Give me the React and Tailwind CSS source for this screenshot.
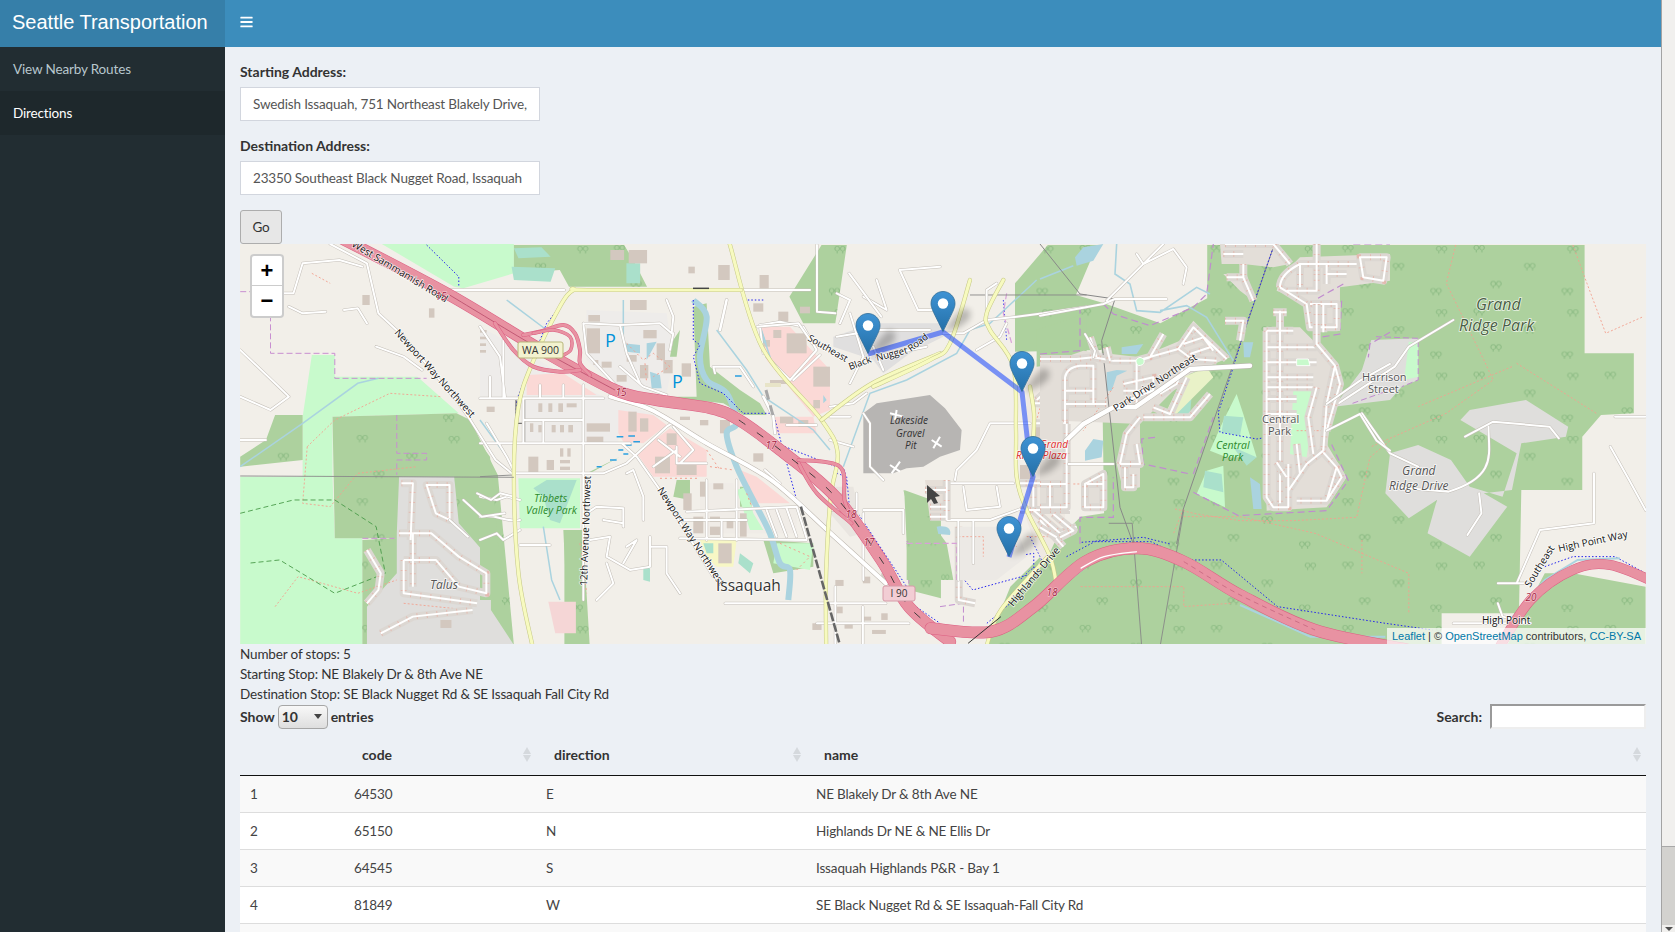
import React from "react";
import { FaBars } from "react-icons/fa";

// catmull-rom through a flat list of x,y pairs, keeps the big roads from looking angular
const curve = (pts) => {
  const p = [];
  for (let i = 0; i < pts.length; i += 2) p.push([pts[i], pts[i + 1]]);
  let d = `M${p[0][0]} ${p[0][1]}`;
  for (let i = 0; i < p.length - 1; i++) {
    const a = p[i - 1] || p[i];
    const b = p[i];
    const c = p[i + 1];
    const e = p[i + 2] || c;
    d += `C${b[0] + (c[0] - a[0]) / 6} ${b[1] + (c[1] - a[1]) / 6} ${c[0] - (e[0] - b[0]) / 6} ${c[1] - (e[1] - b[1]) / 6} ${c[0]} ${c[1]}`;
  }
  return d;
};

const Road = ({ d, w = 2.5, fill = "#ffffff", edge = "#c4bfb8" }) => (
  <>
    <path d={d} fill="none" stroke={edge} strokeWidth={w + 1} strokeLinejoin="round" strokeLinecap="round" vectorEffect="non-scaling-stroke" />
    <path d={d} fill="none" stroke={fill} strokeWidth={w} strokeLinejoin="round" strokeLinecap="round" vectorEffect="non-scaling-stroke" />
  </>
);

// housing streets: grey band, faint red garden dots, white street
const Estate = ({ d }) => (
  <>
    <path d={d} fill="none" stroke="#dcd7d2" strokeWidth="8" strokeLinejoin="round" vectorEffect="non-scaling-stroke" />
    <path d={d} fill="none" stroke="#ee8f7e" strokeWidth="6" strokeDasharray="1 9" opacity="0.4" vectorEffect="non-scaling-stroke" />
    <path d={d} fill="none" stroke="#ffffff" strokeWidth="2" strokeLinejoin="round" vectorEffect="non-scaling-stroke" />
  </>
);

const Line = ({ d, color, w = 1, dash }) => (
  <path d={d} fill="none" stroke={color} strokeWidth={w} strokeDasharray={dash} vectorEffect="non-scaling-stroke" />
);

const Pin = ({ x, y }) => (
  <g transform={`translate(${x - 12.5} ${y - 41})`}>
    <path d="M13 41L24 26L33 17L40 20L39 28L29 36Z" fill="#000000" opacity="0.24" filter="url(#pinBlur)" />
    <path
      d="M12.5 0.5C5.9 0.5 0.5 5.9 0.5 12.5C0.5 17.5 3.5 22 12.5 40.5C21.5 22 24.5 17.5 24.5 12.5C24.5 5.9 19.1 0.5 12.5 0.5Z"
      fill="url(#pinFill)"
      stroke="#2e6c97"
      strokeWidth="0.8"
    />
    <circle cx="12.5" cy="12.5" r="5.2" fill="#ffffff" />
  </g>
);

const labelFont = "'Open Sans','Noto Sans',sans-serif";

const MapText = ({ x, y, r = 0, size = 10, color = "#222222", italic, halo = true, children }) => (
  <text
    x={x}
    y={y}
    transform={r ? `rotate(${r} ${x} ${y})` : undefined}
    fontFamily={labelFont}
    fontSize={size}
    fontStyle={italic ? "italic" : "normal"}
    fill={color}
    stroke={halo ? "#ffffff" : "none"}
    strokeWidth={halo ? 1.6 : 0}
    strokeOpacity="0.75"
    paintOrder="stroke"
  >
    {children}
  </text>
);

const Blocks = ({ list, fill = "#d3c8bf" }) =>
  list.map(([x, y, w, h], i) => <rect key={i} x={x} y={y} width={w} height={h} fill={fill} />);

// around the WA 900 junction, true 3x crop
const bldTown = [
  [320,85,40,75],[325,45,35,20],[450,0,50,30],[365,185,30,18],[410,225,30,20],[340,180,15,15],[490,90,40,25],[530,130,25,50],[550,180,28,40],
  [480,195,25,40],[440,165,30,20],[605,190,28,40],[0,90,20,8],[0,110,20,8],[0,130,18,8],[0,150,18,8],[20,320,24,16],[175,310,12,26],[205,310,12,26],
  [235,310,14,26],[260,310,30,12],[150,370,10,26],[175,375,10,22],[215,375,12,22],[240,375,12,22],[265,375,14,22],[320,370,70,25],[320,410,50,18],
  [145,470,30,50],[200,480,22,30],[240,445,10,25],[262,445,10,25],[240,480,30,10],[240,500,30,10],[445,335,25,60],[480,355,25,40],[525,470,45,50],
  [560,400,30,35],[590,495,60,30],[660,545,20,45],[610,580,25,50],[700,550,30,18],[640,650,30,50],[690,650,30,15],[690,680,30,25],[740,660,20,25],
  [780,640,20,70],[715,730,40,60],[820,460,30,25],[920,100,60,60],[1000,200,50,60],[880,90,24,24],[850,120,20,20],[870,240,60,12],[900,350,40,20],
  [955,360,30,20],[1000,300,20,25],[960,20,30,20],[820,10,30,25],[895,35,30,30],[660,360,25,16],[600,350,30,10],[720,360,30,40],
];

const bldWest = [
  [310,165,16,30],[455,205,12,28],[1085,75,25,45],[1175,105,20,40],[1020,80,14,20],[480,1140,24,24],[1340,1100,16,20],[1400,1130,18,12],[1440,1120,14,20],
  [1290,1150,20,20],[1360,1150,18,16],[1420,1170,30,12],[850,30,30,30],[890,30,40,40],[1340,1020,18,18],[1400,1010,16,20],[1440,1000,10,20],
];

const treeSpots =
  "M24 30a5 7 0 1 1 .1 0M24 30v7M36 30a5 7 0 1 1 .1 0M36 30v7M132 84a5 7 0 1 1 .1 0M132 84v7M144 84a5 7 0 1 1 .1 0M144 84v7M224 33a5 7 0 1 1 .1 0M224 33v7M236 33a5 7 0 1 1 .1 0M236 33v7M60 138a5 7 0 1 1 .1 0M60 138v7M72 138a5 7 0 1 1 .1 0M72 138v7M212 159a5 7 0 1 1 .1 0M212 159v7M224 159a5 7 0 1 1 .1 0M224 159v7";

const eastForest =
  "M160 130L230 15H1375V340H1480V520L1410 525L1370 590V750H1240L1235 1120H1070V1215H100L150 1040L300 830L350 820L345 330L160 335ZM1290 1000L1350 1000L1505 1040V1215H1210Z";
const westForest =
  "M120 525H180V660L44 680V650L100 600ZM245 530L385 525L515 520L545 540L605 705L385 705V895H250ZM385 705H605L640 1215H310V900L385 895ZM640 15H880L900 60L930 140H760L740 90L640 100ZM1240 170L1310 15H1365L1340 250H1270ZM750 870H790L805 1215H750ZM1490 750L1570 790V1075L1500 1050Z";

const MapCanvas = () => (
  <svg width="1406" height="400" className="block" viewBox="0 0 1406 400">
    <defs>
      <linearGradient id="pinFill" x1="0" y1="0" x2="0" y2="1">
        <stop offset="0" stopColor="#3f93d4" />
        <stop offset="1" stopColor="#2470a8" />
      </linearGradient>
      <filter id="pinBlur" x="-50%" y="-50%" width="200%" height="200%">
        <feGaussianBlur stdDeviation="3.2" />
      </filter>
      <pattern id="trees" width="280" height="190" patternUnits="userSpaceOnUse">
        <path d={treeSpots} fill="none" stroke="#8fbd86" strokeWidth="2.6" />
      </pattern>
    </defs>
    <rect width="1406" height="400" fill="#f2efe9" />

    {/* west land */}
    <g transform="translate(-20 -4) scale(0.4592 0.3333)">
      <path d="M200 345H250V410H430L520 520L245 530V710H180V530ZM44 710H245L250 895H310V1215H44ZM350 10H640V100L530 145L510 140ZM400 670H440V705H400Z" fill="#c8facc" />
      <path d={westForest} fill="#add19e" />
      <path d={westForest} fill="url(#trees)" />
      <path d="M390 710H510L520 850L590 960V1110L640 1215H320V1100L385 1000L385 880Z" fill="#dfdedc" />
      <path d="M640 25L700 22L720 50L650 55ZM635 80L730 85L720 125L640 120ZM885 70H915V130H885Z" fill="#aae0cb" />
      <path d="M715 1085H775V1180H730Z" fill="#f5d6d6" />
      <Blocks list={bldWest} />
      <Line color="#aad3df" w={1.5} d="M44 680L180 550L300 430L345 415" />
      <Line color="#c88fd0" w={1} dash="6 3" d="M44 155H110V340H250V415H450M385 525V640H450V660H385V705M310 895H380M1495 905H1568M1500 905V1050" />
      <Line color="#f3a08f" w={0.9} dash="2 2" d="M190 620L250 540L370 460L480 470M190 620L180 790L240 800L300 700L430 680M120 1100L170 1010L300 1060L385 1020M400 1090L540 1110M200 100L240 130" />
      <Line color="#4a9b4a" w={0.9} dash="5 3" d="M44 820L160 780L250 780L340 860L360 1000L250 1060L130 960L60 970" />
      <Line color="#2222ee" w={1} dash="1.5 2" d="M450 15L520 110V140M1230 620L1360 690L1370 780L1500 1050M1505 1090L1568 1150" />
    </g>

    {/* east land */}
    <g transform="translate(700 -4) scale(0.4688 0.3333)">
      <path d={eastForest} fill="#add19e" />
      <path d={eastForest} fill="url(#trees)" />
      <path d="M335 15H570V175L470 250L350 190L290 165Z" fill="#f2efe9" />
      <path d="M960 640L1020 615L1090 660L1130 740L1200 770L1230 640L1110 540L1130 510L1210 490L1250 480L1340 560L1335 590L1240 610L1220 750L1160 760L1210 800L1130 950L1040 880L1060 780L1000 835L950 760Z" fill="#dfdedc" />
      <path d="M920 300L1020 295L1020 420L985 440L960 480L840 500L900 390Z" fill="#dfdedc" />
      <path d="M1000 305L1020 310V410L990 420Z" fill="#c8facc" />
      <Line color="#c08bcf" w={1} dash="6 3" d="M930 290L1020 295L1020 420L985 440M880 490L960 450M0 1100L50 1090V1150" />
      <Line color="#f3a08f" w={0.9} dash="2 2" d="M1100 15L1080 130L1160 360L1180 420L1080 520L920 620M1350 15L1380 130L1420 280L1500 230M1230 370L1400 520M520 830L640 830L800 880L1000 1000L1000 1120M300 1040H520L520 1100L620 1090M900 900L900 1000M1220 380L1020 500" />
      <Line color="#2222ee" w={1} dash="1.5 2" d="M270 950L330 905H450L530 960H600L720 1100L950 1150L1050 1170M110 960L200 940V1000L70 1050L40 1000M100 1150L150 1090M1290 980L1350 950H1440L1505 1000" />
      <Line color="#888888" w={0.9} d="M520 810L470 1215M360 850L410 850L430 1215" />
      <Road w={2} d="M1120 590L1180 545L1300 560L1320 595M1170 560C1170 640 1190 710 1085 755L960 740M1150 760L1155 820L1125 885M850 490L970 380L1000 320L1095 240M900 520L960 640L1020 680" />
      <Road w={2} d="M1440 530H1505M1430 620L1470 720L1505 810M1395 700V850L1280 870L1230 1030M1190 1030H1260M1095 1150H1260L1200 1130L1190 1090" />
      <Estate d="M40 860V1080L75 1090" />
    </g>

    {/* WA 900 junction and town, true 3x crop */}
    <g transform="translate(240 56) scale(0.3333)">
      <path d="M0 80L130 150L300 260L400 300L540 350L415 400V430H310L130 430V300L0 295ZM320 30L560 40L580 180L560 280L420 270L320 180Z" fill="#eeecea" />
      <path d="M415 330L520 345L560 375L490 430L430 425L415 400ZM470 460L570 385L680 450V530H520ZM140 225L250 220L350 285H140ZM840 80H930L1050 210V330L1000 350L860 180ZM880 350H1000L1010 400H890ZM780 510L830 530L930 610H830Z" fill="#fbd9d6" />
      <path d="M660 550V700H950V620L780 640L760 550Z" fill="#f0ece7" />
      <path d="M115 535H300V685H120Z" fill="#c8facc" />
      <path d="M160 565L200 540H290L240 670L210 660L190 590Z" fill="#aae0cb" />
      <path d="M0 430L30 470L70 900H0ZM250 690H300L310 900H260ZM590 540H630V600L580 590ZM545 290L650 290L640 20L680 10L690 200L780 270L840 310L860 345H790L730 310ZM580 120L600 90L590 170H570ZM850 720L1000 730L1000 800L880 820Z" fill="#add19e" />
      <path d="M320 520L420 470L330 520ZM780 560H810L815 620H780Z" fill="#add19e" />
      <path d="M770 570L800 560L820 640L850 690L810 690ZM890 730L1000 730L990 810L880 790Z" fill="#c8facc" />
      <path d="M660 720H770L760 800H710L680 770Z" fill="#f7f7c5" />
      <path d="M670 730H700V760H680ZM780 760L820 790L810 820L775 790ZM490 800L510 805V845L490 840Z" fill="#aae0cb" />
      <Blocks list={bldTown} />
      <path d="M510 215L540 225L545 265L515 265ZM430 130L480 135L480 160L440 155ZM500 130L530 125L500 180Z" fill="#aad3df" />
      <path d="M1030 285L1040 300L1030 310ZM845 85L860 130L840 130Z" fill="#aad3df" />
      <Line color="#aad3df" w={6} d={curve([640, 0, 680, 50, 660, 170, 680, 240, 740, 280, 770, 370, 740, 400, 770, 500, 830, 620, 870, 700, 900, 790, 930, 810, 925, 900])} />
      <Line color="#aad3df" w={1.5} d="M80 0L200 90M430 0V120M0 360L80 470L100 510M190 680L215 840L240 900M710 90L800 210L850 290L1000 390L1050 450M840 80L880 200" />
      <Line color="#2aa0e0" w={1.5} d="M765 228H785M410 410H430M445 408H465M430 435H455M460 425H480M415 450H430M430 462H445M390 480H410M350 500H365" />
      <Line color="#f3a08f" w={1} dash="2 3" d="M440 130L490 180L520 160L570 200L520 230M495 190L500 250M680 450L720 510M690 500L760 510M800 580L815 620M900 730L990 770L950 810M540 535H660M300 730L320 880" />
      <Line color="#2222ee" w={1} dash="1.5 2" d="M240 20L200 70L110 300L100 510M640 0L640 120L660 135L640 170L660 250L730 280L790 340H870M850 0L790 0M880 340L950 600" />
      <Line color="#555555" w={1} d="M108 300V430M134 300V430M110 370H134" />
      <Line color="#888888" w={0.9} d="M0 530L100 525" />
      <Road w={2} d="M0 295H370M130 360H310M0 430H450M100 520H370L440 490L560 380L575 370M310 255V900M180 255V295M250 255V295M130 295V430M190 360V430M30 230V290M70 120V290M0 80L60 170L75 290M20 370L80 470L105 520M425 430L470 470L540 570L700 830M580 380L640 450M535 420L600 470M590 440V490H680M640 450L600 490M520 500L590 450M310 70L420 75L540 70L575 100L580 50L560 0M420 75L440 160L480 250M420 200L490 260L560 285M310 70L320 160L420 270M580 100L570 150" />
      <Road w={2} d="M680 540V720M770 540V720M620 635L950 620M600 715L980 720M610 660L800 660M725 660V715M860 630L890 710M890 630L920 710M920 625L950 710M950 620L980 715M900 550L855 510M700 200L780 200L820 260M705 220L700 200M920 375H1010M840 75L900 65L970 80L1010 150L930 240M860 170L930 240M940 240L1020 165M850 160L840 80" />
      <Road w={2} d="M320 640L350 620L430 625L430 680M440 520L460 510L490 590L490 660M370 660L430 670M330 720L390 710L380 770L450 810L510 800L510 710M440 740L470 720L430 790M510 740L560 740L560 820L600 880M380 790L400 850L350 900M120 735H210M0 590L50 600L80 590L120 600M0 650C50 640 80 670 120 660M0 720L50 700L70 720L120 690" />
      <Road w={2.5} d="M720 90L740 0M850 290L880 350L885 400" />
      <Line color="#e8e4c8" w={4} dash="16 6" d="M855 255H920" />
      <Line color="#a8a8a8" w={3} dash="10 6" d="M858 270L880 350" />
    </g>

    {/* centre, true 3x crop */}
    <g transform="translate(590 36) scale(0.3333)">
      <path d="M10 170L130 130H340V170L240 220L160 280L130 240L10 200Z" fill="#e0dfdf" />
      <path d="M100 400L140 370L300 345L345 385L395 450L390 510L330 530L280 560L230 565L190 580L100 580Z" fill="#b7b5b3" />
      <path d="M220 630L270 680L350 790L370 900H230V790L255 760Z" fill="#add19e" />
      <path d="M230 790H370V900H230Z" fill="url(#trees)" />
      <path d="M0 620L70 620L100 760L60 770L0 700Z" fill="#e9e5e0" />
      <path d="M385 740H560L590 830L500 900H385Z" fill="#ece9e5" />
      <path d="M285 600H360V720H300Z" fill="#e6dfd8" />
      <path d="M590 250L705 240V720L640 860L590 720Z" fill="#efe9e2" />
      <path d="M620 150L770 100V240L620 260Z" fill="#add19e" />
      <Blocks list={[[615,430,45,40],[668,430,30,40],[570,555,40,42],[660,540,40,60],[30,640,20,20],[30,680,14,24],[70,720,20,20],[600,470,40,30]]} />
      <path d="M320 740C350 735 365 745 360 765L325 762Z" fill="#aad3df" />
      <Line color="#aad3df" w={1.5} d="M40 560L120 340L230 300L380 220L420 150L480 130L620 0" />
      <Line color="#4444ee" w={1} dash="1.5 2" d="M20 580L50 590L60 700L190 900M520 60L530 180M600 770L640 850L600 870L570 900" />
      <Line color="#d8a0d8" w={1.2} dash="6 3" d="M530 40L520 100L545 190M230 790H380V900" />
      <Line color="#888888" w={0.9} d="M420 45H770" />
      <Line color="#f3a08f" w={0.9} dash="2 2" d="M385 770H460V830M430 740V830M510 760L560 800M590 770H700M640 350L620 420" />
      <Road w={2} d="M20 170L140 150H300M130 200L160 270M140 230L290 200M100 400L120 430V560L160 600M0 380L70 370L110 340M0 410H60M60 310L100 230L60 100M100 50L170 90L140 0M0 480L70 500M0 690H80V640M100 690H220V760M100 700V900M0 760L120 870M20 40L60 60L30 130" />
      <Road w={2} d="M375 600L380 570L440 510L480 430H600M350 610H550M350 720H480L590 680M400 620L410 690L510 680L500 620M340 160H400L470 120L560 110L640 100L770 80M470 120V30L500 10M530 130L510 170L440 210M385 720V900M430 720V850" />
      <Estate d="M610 370H705V610H570M610 430H705M570 690H720M610 620V680M650 620V680M690 620V680M610 690L690 760L740 740M630 720L700 800M620 360L700 290H770" />
      <Estate d="M285 630H350M300 680H350M300 710H350M350 600V720" />
      <Line color="#ffffff" w={2} d="M180 400L220 410M200 390L195 420M305 480L335 500M330 470L310 505M180 555L210 575M210 545L185 580" />
    </g>

    {/* Park Drive estates, true 3x crop */}
    <g transform="translate(800 0) scale(0.3333)">
      <path d="M60 345L130 320L300 340L420 290L460 230L570 340L450 390L300 540L60 530ZM670 250H780L830 300L900 400L860 600L920 700L860 790L680 800ZM720 100L780 40L1050 30V110L900 130V260H810V180L710 140ZM540 0H700L750 60L700 70L610 60L545 60ZM0 340H70V800H0ZM230 660L260 560L300 530L300 730L250 740ZM130 720L195 690V800H130ZM550 90L620 90L640 170L600 140Z" fill="#e3ded8" />
      <path d="M590 450L610 510L650 640L560 640L510 620L550 530ZM470 750L500 680L550 665L555 790ZM760 440L830 430L800 640L750 630Z" fill="#c8facc" />
      <path d="M415 455H455L450 515H415ZM552 515L610 520L600 575L545 565ZM495 680L545 690L550 745L490 730ZM580 610L650 640L620 665Z" fill="#aae0cb" />
      <path d="M610 295H640L630 340L612 340ZM160 585L190 590L185 640L135 650V620ZM630 700L660 720L665 795H640ZM200 385L230 378L262 380L230 395L215 440L200 440ZM245 310L310 300L290 330H245ZM105 40L130 10L190 0L160 50L110 65Z" fill="#aad3df" />
      <path d="M430 400L500 370L520 400L470 450L400 520L380 500Z" fill="#e9f2c8" />
      <Line color="#aad3df" w={1.6} d="M0 105L100 65M230 0L225 90L270 120L290 200L360 205L470 130L510 150M360 200L440 185L500 220L580 350" />
      <Line color="#c08bcf" w={1.2} dash="7 4" d="M0 330L120 320V190M190 180L220 210L330 245L460 190L500 150L520 0M345 580L305 585L310 660L450 690M460 745L595 815L860 800L925 710L870 590M905 170L900 270L840 280M120 900V820H220V700M460 690L520 520M940 0L1050 0M910 120L830 165M1050 265L990 300L985 340" />
      <Line color="#f3a08f" w={0.9} dash="2 2" d="M405 795L470 810L600 830L760 830L950 820L990 640L1050 590M220 430L130 560M100 720H130M430 795L400 870M860 560H770" />
      <Line color="#888888" w={1} d="M0 0L120 150L225 165L185 290L240 790L280 900M700 10L430 795L410 900" />
      <Line color="#2222ee" w={1} dash="1.5 2" d="M700 10L670 95L620 240L575 385L535 505L540 565L650 585L680 580M125 895L310 880L390 900" />
      <Estate d="M75 530V400Q80 370 120 365H160V480M75 440H160M75 480H200M0 345H110L160 340L220 350H290L415 315L455 345L530 350M290 350V490M250 420L340 400V440L250 440M260 470L340 440M300 350L330 340L370 270M415 315L460 250L560 345M430 300L490 280M450 330L510 310M490 280L520 320" />
      <Estate d="M360 450L410 420L430 370M340 490L390 510L440 400M310 520H450L510 450M240 660L260 570L300 520M240 660H300L290 600M255 670V730H280V690M135 790V720L190 690V790ZM140 720H190M0 790H80V540M0 720H80M30 790V720M0 850L50 880M40 810L100 860L60 880M200 310L210 350M150 280L170 340" />
      <Estate d="M680 260V510M720 200V780M680 260H760M680 310H830M680 355H830M680 400H820M680 430H820M680 465H770M680 510H770M700 205H740M720 130Q720 90 780 60H950M740 140H830V50M780 60V130M860 60V120M860 90H920M960 40H1040L1030 110L970 100ZM830 0V120M720 130L800 180L810 250H890V180H810M850 180V265" />
      <Estate d="M830 180V300L885 365L860 480L850 620M885 365L900 420L860 560M830 430L805 520L820 630M850 620L800 660L745 740M850 625L890 670L860 770H770M890 670L905 700L860 770M680 510V760L700 790H745V660M710 655L740 700M770 600L780 690M560 100H610L640 170M555 0H700L750 60M610 60V100M550 30H610M555 230H610L600 290" />
      <path d="M300 340C320 345 315 365 295 365C285 355 285 345 300 340ZM770 345H805L810 365H770Z" fill="#c8facc" stroke="#ffffff" strokeWidth="0.9" vectorEffect="non-scaling-stroke" />
      <Road w={2} d="M0 215L190 180L225 165H380M370 0L200 170M290 30L310 60L400 15L440 70L430 120M85 660H220M135 270L165 320L160 340M860 480L960 410L1050 360M860 560L960 510L1010 590L1050 620" />
      <Road w={4.5} edge="#b8b3ad" d="M78 590L130 540L220 490H285L350 445L450 375L630 365" />
    </g>

    {/* trunk roads go on top of everything */}
    <g transform="translate(-20 -4) scale(0.4592 0.3333)">
      <Road w={4} edge="#bbb5ad" d={curve([850, 470, 940, 510, 1060, 610, 1200, 720, 1330, 880, 1450, 1030])} />
      <Road w={2} d="M240 12L320 70L345 220L400 290L520 490L545 540L600 660L640 705M160 160H110M160 160L180 70L260 60L310 80M150 200L180 220L230 215M340 320L400 350L440 390M44 330L120 430L150 470L110 510L44 470M270 210L300 205L320 250M44 600H100M500 150H750M1135 150H1285M1300 15V215L1340 220M1370 100L1440 230M1480 90L1568 80M1480 90L1520 210H1568M1170 260L1260 250L1290 310" />
      <Estate d="M395 730H420L415 900M450 735H500V840L470 820ZM390 880H460L520 950L580 1000V1060L520 1040L470 960H400M400 960V1060L560 1090M420 880V1040M350 1180L420 1130L550 1110M320 930L350 1000L345 1050L320 1090" />
      <Road w={2} d="M560 760L590 780L610 760L640 770M530 780L570 830L620 820M500 840L540 890M1100 1090H1450M1300 1150H1500M1340 1040V1210M1400 1100V1210" />
      <Road w={3.2} fill="#f7fabf" edge="#c5c787" d={curve([1110, 12, 1180, 320, 1310, 540, 1345, 640, 1330, 770, 1320, 1000, 1320, 1215])} />
      <Road w={3.2} fill="#f7fabf" edge="#c5c787" d={curve([1135, 150, 800, 150, 770, 150, 740, 200, 680, 370, 650, 500, 640, 700, 650, 1000, 680, 1215])} />
      <Road w={3.2} fill="#f7fabf" edge="#c5c787" d={curve([1310, 540, 1420, 430, 1568, 340])} />
      <Line color="#666666" w={2.6} dash="9 2" d="M1265 800L1350 1215" />
      <Line color="#444444" w={1.5} d="M1030 145H1065" />
      <Line color="#8a8a8a" w={0.9} d="M44 708L640 712" />
      <Road w={11} fill="#e892a2" edge="#dc5f82" d={curve([265, -5, 500, 165, 700, 330, 860, 450, 950, 480, 1070, 505, 1130, 540, 1220, 630, 1340, 770, 1440, 960, 1500, 1100, 1590, 1205])} />
      <Road w={3} fill="#e892a2" edge="#dc5f82" d={curve([1260, 660, 1350, 680, 1360, 780, 1375, 830])} />
      <Road w={3} fill="#e892a2" edge="#dc5f82" d={curve([1260, 670, 1300, 760, 1375, 850])} />
      <Line color="#b84a68" w={0.8} d={curve([500, 165, 700, 330, 860, 450])} />
      <Line color="#333333" w={0.9} dash="8 14" d={curve([1130, 540, 1220, 630, 1340, 770, 1440, 960, 1500, 1100, 1580, 1190])} />
    </g>
    <g transform="translate(240 56) scale(0.3333)">
      <Road w={3} fill="#e892a2" edge="#dc5f82" d={curve([45, 70, 100, 150, 160, 200, 240, 215, 300, 210])} />
      <Road w={3} fill="#e892a2" edge="#dc5f82" d={curve([130, 105, 190, 92, 250, 75, 285, 100, 300, 150, 300, 190, 330, 225])} />
      <Road w={2.5} fill="#e892a2" edge="#dc5f82" d={curve([160, 100, 220, 90, 270, 110, 272, 150, 240, 170])} />
    </g>
    <g transform="translate(590 36) scale(0.3333)">
      <Road w={3.2} fill="#f7fabf" edge="#c5c787" d={curve([130, 320, 300, 240, 360, 190, 420, 0])} />
      <Road w={3.2} fill="#f7fabf" edge="#c5c787" d={curve([520, 0, 470, 100, 480, 150, 550, 260, 558, 450, 560, 590, 590, 690, 660, 830, 680, 920])} />
      <Road w={3.2} fill="#f7fabf" edge="#c5c787" d={curve([600, 320, 612, 400, 610, 480])} />
    </g>
    <g transform="translate(700 -4) scale(0.4688 0.3333)">
      <Road w={3.2} fill="#f7fabf" edge="#c5c787" d={curve([230, 950, 130, 1110, 100, 1215])} />
      <Line color="#aad3df" w={2} d="M130 1180L330 960M640 1095L790 1190L950 1190M1210 1150L1290 1020L1360 960L1450 955" />
      <Road w={11} fill="#e892a2" edge="#dc5f82" d={curve([-20, 1165, 110, 1175, 200, 1100, 310, 965, 420, 925, 520, 965, 640, 1065, 800, 1170, 1000, 1230])} />
      <Road w={9} fill="#e892a2" edge="#dc5f82" d={curve([1190, 1230, 1260, 1080, 1350, 990, 1430, 975, 1530, 1030])} />
      <Line color="#ffffff" w={1.4} d={curve([300, 985, 350, 950, 420, 935])} />
      <Line color="#c0607a" w={0.7} dash="5 4" d={curve([520, 965, 640, 1065, 800, 1170])} />
      <Line color="#333333" w={1} d="M60 1210L130 1130" />
    </g>

    {/* page coordinates from here */}
    <g transform="translate(-240 -244)">
      <path d="M868 354L943 332L1022 392L1028 445L1033 477L1020 520L1009 557" fill="none" stroke="#0033ff" strokeOpacity="0.5" strokeWidth="5" strokeLinejoin="round" />
      <path d="M927 485L927 503L931 499L934 504L938 503L935 497L940 496Z" fill="#444444" />

      <MapText x={351} y={246} r={31} color="#111111">West Sammamish Road</MapText>
      <MapText x={394} y={333} r={48} color="#111111">Newport Way Northwest</MapText>
      <MapText x={657} y={490} r={57} color="#111111">Newport Way Northwest</MapText>
      <MapText x={587} y={586} r={-88} color="#111111">12th Avenue Northwest</MapText>
      <MapText x={807} y={340} r={30} size={9.5} color="#111111">Southeast</MapText>
      <MapText x={850} y={370} r={-20} size={9.5} color="#111111">Black</MapText>
      <MapText x={877} y={361} r={-14} size={9.5} color="#111111">Nugget</MapText>
      <MapText x={911} y={352} r={-38} size={9.5} color="#111111">Road</MapText>
      <MapText x={1116} y={412} r={-33} color="#111111">Park Drive Northeast</MapText>
      <MapText x={1013} y={607} r={-50} color="#111111">Highlands Drive</MapText>
      <MapText x={1530} y={588} r={-58} color="#111111">Southeast</MapText>
      <MapText x={1559} y={552} r={-12} color="#111111">High Point Way</MapText>
      <MapText x={1482} y={624} color="#111111">High Point</MapText>

      <MapText x={716} y={591} size={15.5} color="#333333">Issaquah</MapText>
      <MapText x={430} y={589} size={12} italic color="#555555">Talus</MapText>
      <MapText x={534} y={502} size={10.5} italic color="#2c8a2c" halo={false}>Tibbets</MapText>
      <MapText x={526} y={514} size={10.5} italic color="#2c8a2c" halo={false}>Valley Park</MapText>
      <MapText x={890} y={424} italic color="#333333" halo={false}>Lakeside</MapText>
      <MapText x={896} y={437} italic color="#333333" halo={false}>Gravel</MapText>
      <MapText x={905} y={449} italic color="#333333" halo={false}>Pit</MapText>
      <MapText x={1476} y={310} size={16} italic color="#4a5f45">Grand</MapText>
      <MapText x={1459} y={331} size={16} italic color="#4a5f45">Ridge Park</MapText>
      <MapText x={1362} y={381} size={11} color="#555555">Harrison</MapText>
      <MapText x={1368} y={393} size={11} color="#555555">Street</MapText>
      <MapText x={1262} y={423} size={11} color="#555555">Central</MapText>
      <MapText x={1268} y={435} size={11} color="#555555">Park</MapText>
      <MapText x={1216} y={449} size={10.5} italic color="#2c8a2c" halo={false}>Central</MapText>
      <MapText x={1222} y={461} size={10.5} italic color="#2c8a2c" halo={false}>Park</MapText>
      <MapText x={1402} y={475} size={12} italic color="#555555">Grand</MapText>
      <MapText x={1389} y={490} size={12} italic color="#555555">Ridge Drive</MapText>
      <MapText x={1040} y={448} size={10} italic color="#e02a2a">Grand</MapText>
      <MapText x={1016} y={459} size={10} italic color="#e02a2a">Ridge Plaza</MapText>

      <text x={605} y={347} fontSize="18" fontFamily={labelFont} fill="#0092da">P</text>
      <text x={672} y={388} fontSize="18" fontFamily={labelFont} fill="#0092da">P</text>

      {[[441,300,"15"],[621,396,"15"],[771,449,"17"],[851,518,"18"],[869,546,"17"],[1052,596,"18"],[1531,601,"20"]].map(([x, y, n], i) => (
        <text key={i} x={x} y={y} fontSize="10" fontStyle="italic" fontFamily={labelFont} fill="#a3183c" stroke="#ffffff" strokeWidth="1" strokeOpacity="0.6" paintOrder="stroke" textAnchor="middle">{n}</text>
      ))}

      <rect x={518} y={342} width={45} height={16} rx={2} fill="#f3f2cf" stroke="#b8b77c" />
      <text x={540.5} y={354} fontSize="10.5" fontFamily={labelFont} fill="#333333" textAnchor="middle">WA 900</text>
      <rect x={883} y={586} width={32} height={15} rx={2} fill="#f2cdd4" stroke="#d69aa8" />
      <text x={899} y={597} fontSize="10" fontFamily={labelFont} fill="#333333" textAnchor="middle">I 90</text>

      <Pin x={868} y={354} />
      <Pin x={943} y={332} />
      <Pin x={1022} y={392} />
      <Pin x={1033} y={477} />
      <Pin x={1009} y={557} />
    </g>
  </svg>
);

const rows = [
  ["1", "64530", "E", "NE Blakely Dr & 8th Ave NE"],
  ["2", "65150", "N", "Highlands Dr NE & NE Ellis Dr"],
  ["3", "64545", "S", "Issaquah Highlands P&R - Bay 1"],
  ["4", "81849", "W", "SE Black Nugget Rd & SE Issaquah-Fall City Rd"],
];

const SortArrows = () => (
  <span className="absolute right-[5px] top-[11px] flex flex-col gap-[1px]">
    <span className="block w-0 h-0 border-x-[4px] border-x-transparent border-b-[7px] border-b-[#d5d9dd]" />
    <span className="block w-0 h-0 border-x-[4px] border-x-transparent border-t-[7px] border-t-[#d5d9dd]" />
  </span>
);

const bodyText = "text-[13.5px] tracking-[-0.15px]";
const addressInput = `block w-[300px] h-[34px] px-[12px] bg-white border border-[#d2d6de] text-[#555555] outline-none mb-[15px] ${bodyText}`;

const App = () => {
  return (
    <div className="flex w-full h-[932px] overflow-hidden bg-[#ecf0f5] font-['Lato','Noto_Sans',sans-serif] text-[14px] leading-[20px] text-[#333333]">
      <div className="flex-1 min-w-0 flex flex-col">
        {/* Header */}
        <header className="flex h-[47px] shrink-0 bg-[#3c8dbc] text-white">
          <div className="w-[225px] shrink-0 bg-[#367fa9] pl-[12px] pt-[10px] font-['Liberation_Sans',sans-serif] text-[20px] leading-[24px]">
            Seattle Transportation
          </div>
          <div className="pl-[15px] pt-[15px]">
            <FaBars className="w-[13px] h-[14px]" />
          </div>
        </header>

        <div className="flex flex-1 min-h-0">
          {/* Sidebar */}
          <aside className={`w-[225px] shrink-0 bg-[#222d32] ${bodyText}`}>
            <div className="h-[44px] pl-[13px] flex items-center text-[#b8c7ce]">View Nearby Routes</div>
            <div className="h-[44px] pl-[13px] flex items-center text-white bg-[#1e282c]">Directions</div>
          </aside>

          {/* Content */}
          <main className="flex-1 min-w-0 pt-[15px] pl-[15px] pr-[15px]">
            <label className="block font-bold mb-[5px]">Starting Address:</label>
            <input readOnly value="Swedish Issaquah, 751 Northeast Blakely Drive, Issaquah" className={addressInput} />
            <label className="block font-bold mb-[5px]">Destination Address:</label>
            <input readOnly value="23350 Southeast Black Nugget Road, Issaquah" className={addressInput} />
            <button className={`block w-[42px] h-[34px] bg-[#e7e7e7] border border-[#adadad] rounded-[3px] text-[#333333] ${bodyText}`}>Go</button>

            <div className="relative h-[400px] overflow-hidden">
              <MapCanvas />
              <div className="absolute left-[10px] top-[10px] border-2 border-black/20 rounded-[4px] bg-white font-['Liberation_Sans',sans-serif]">
                <div className="w-[30px] h-[30px] flex items-center justify-center border-b border-[#cccccc] text-[22px] font-bold text-black rounded-t-[2px]">+</div>
                <div className="w-[30px] h-[30px] flex items-center justify-center text-[22px] font-bold text-black rounded-b-[2px]">−</div>
              </div>
              <div className="absolute right-0 bottom-0 h-[16px] px-[5px] bg-white/70 text-[11px] leading-[16px] font-['Liberation_Sans',sans-serif] text-[#333333]">
                <span className="text-[#0078a8]">Leaflet</span> | © <span className="text-[#0078a8]">OpenStreetMap</span> contributors, <span className="text-[#0078a8]">CC-BY-SA</span>
              </div>
            </div>

            <div className={bodyText}>
              <div>Number of stops: 5</div>
              <div>Starting Stop: NE Blakely Dr &amp; 8th Ave NE</div>
              <div>Destination Stop: SE Black Nugget Rd &amp; SE Issaquah Fall City Rd</div>
            </div>

            <div className="flex justify-between items-center h-[25px] font-bold">
              <div className="flex items-center gap-[3px]">
                Show
                <span className="relative w-[50px] h-[24px] border border-[#a6a6a6] rounded-[4px] bg-gradient-to-b from-[#f8f8f8] to-[#dedede] pl-[3px] leading-[22px]">
                  10
                  <span className="absolute right-[5px] top-[8px] w-0 h-0 border-x-[4px] border-x-transparent border-t-[5px] border-t-[#444444]" />
                </span>
                entries
              </div>
              <div className="flex items-center gap-[8px]">
                Search:
                <input className="w-[156px] h-[25px] bg-white border-2 border-t-[#9a9a9a] border-l-[#9a9a9a] border-r-[#eeeeee] border-b-[#eeeeee] outline-none" />
              </div>
            </div>

            <table className="w-full table-fixed border-collapse mt-[7px]">
              <thead>
                <tr className="h-[39px] border-b border-[#111111]">
                  <th className="w-[104px]" />
                  <th className="relative w-[192px] pl-[18px] pb-[1px] text-left font-bold">code<SortArrows /></th>
                  <th className="relative w-[270px] pl-[18px] pb-[1px] text-left font-bold">direction<SortArrows /></th>
                  <th className="relative pl-[18px] pb-[1px] text-left font-bold">name<SortArrows /></th>
                </tr>
              </thead>
              <tbody>
                {rows.map((row, index) => (
                  <tr key={row[0]} className={`${index % 2 === 0 ? "bg-[#f9f9f9]" : "bg-white"} border-b border-[#dddddd]`}>
                    {row.map((cell, i) => (
                      <td key={i} className={`px-[10px] py-[8px] text-[#444444] ${bodyText}`}>{cell}</td>
                    ))}
                  </tr>
                ))}
                <tr className="bg-[#f9f9f9]">
                  <td colSpan="4" className="h-[37px]" />
                </tr>
              </tbody>
            </table>
          </main>
        </div>
      </div>

      {/* Scrollbar */}
      <div className="w-[14px] shrink-0 flex flex-col bg-[#f1f0ee] border-l border-[#a3a3a3]">
        <div className="h-[846px]" />
        <div className="h-[79px] bg-[#d3d2cf] border-t border-[#a8a8a8]" />
        <div className="flex-1 flex justify-center pt-[2px] bg-[#f1f0ee]">
          <span className="w-0 h-0 border-x-[4px] border-x-transparent border-t-[4px] border-t-[#505050]" />
        </div>
      </div>
    </div>
  );
};

export default App;
